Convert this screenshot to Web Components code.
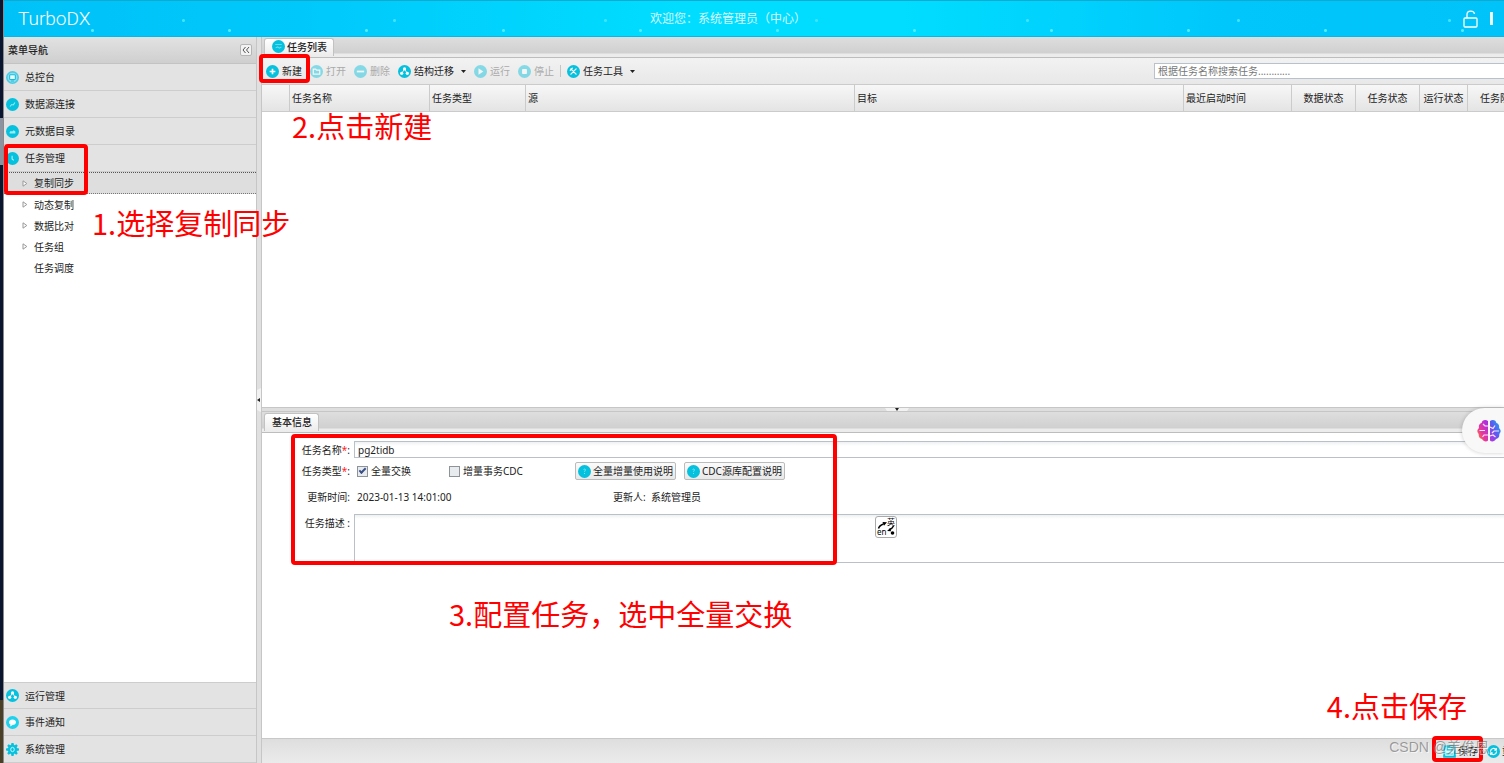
<!DOCTYPE html>
<html lang="zh-CN">
<head>
<meta charset="utf-8">
<title>TurboDX</title>
<style>
  html, body { margin: 0; height: 100%; }
  body {
    font: 10px/14px "Noto Sans", "Noto Sans CJK SC", sans-serif;
    color: #222;
    background: #fff;
    overflow: hidden;
    --cyan: #06c1dd;
    --line: #c8c8c8;
    --red: #f00;
  }
</style>
</head>
<body>
<dx-app></dx-app>

<script>
const BASE = `
  *, *::before, *::after { box-sizing: border-box; }
  button, input, textarea { font: inherit; color: inherit; margin: 0; padding: 0; border: 0; background: none; border-radius: 0; outline: 0; }
  a { color: inherit; text-decoration: none; }
`;

function define(name, css, html) {
  const template = document.createElement('template');
  template.innerHTML = `<style>${BASE}${css}</style>${html}`;
  customElements.define(name, class extends HTMLElement {
    constructor() {
      super();
      this.attachShadow({ mode: 'open' }).append(template.content.cloneNode(true));
    }
  });
}

/* Round toolbar and menu icons, 16-unit grid */
const disc = inner => `<circle cx="8" cy="8" r="8" fill="#06c1dd"/>${inner}`;
const stroke = d => `<path d="${d}" fill="none" stroke="#fff" stroke-width="1.5" stroke-linecap="round" stroke-linejoin="round"/>`;
const ICONS = {
  console: `<circle cx="8" cy="8" r="7" fill="#8fdff0" stroke="#4fcbe2" stroke-width="2"/><rect x="4.500" y="4.500" width="7" height="6" rx="1" fill="#e9fbff" stroke="#16bcd9" stroke-width="1.300"/><path d="M6 12.300h4" stroke="#16bcd9" stroke-width="1.200"/>`,
  link: disc(`<path d="M5 10.500l2-2.500 2 .5 2-3" fill="none" stroke="#8fe9f5" stroke-width="1.300"/>`),
  catalog: disc(`<path d="M4.500 10.500h7V8l-2-1.500-2 1.500-1.500-.5-1.500 1z" fill="#9cecf7"/>`),
  clock: disc(`<path d="M7.500 4.500v4l2 1.800" fill="none" stroke="#b5f2fa" stroke-width="1.300"/>`),
  nodes: disc(`<circle cx="8" cy="4.800" r="2" fill="#fff"/><circle cx="4.500" cy="10.300" r="2" fill="#fff"/><circle cx="11.500" cy="10.300" r="2" fill="#fff"/><path d="M8 5L4.500 10.300M8 5l3.500 5.300" stroke="#fff" stroke-width="1"/>`),
  chat: `<circle cx="8" cy="8" r="8" fill="#1ed2ec"/><path d="M8 4.200c2.600 0 4.300 1.500 4.300 3.400S10.600 11 8 11l-2.800 1.800.3-2.400C4.300 9.700 3.700 8.700 3.700 7.600c0-1.900 1.700-3.400 4.300-3.400z" fill="#fff"/>`,
  gear: `<g fill="#06c1dd"><circle cx="8" cy="8" r="5.800"/><path d="M6.700 0h2.600l.6 3H6.100zM6.700 16h2.600l.6-3H6.100zM0 6.700v2.600l3 .6V6.100zM16 6.700v2.600l-3 .6V6.100zM1.500 3.300l1.800-1.800 2.500 1.700-2.600 2.600zM14.500 3.300l-1.800-1.800-2.500 1.700 2.600 2.600zM1.500 12.700l1.800 1.800 2.500-1.700-2.600-2.600zM14.500 12.700l-1.800 1.800-2.500-1.700 2.600-2.600z"/></g><ellipse cx="8" cy="8" rx="2.200" ry="2.700" fill="none" stroke="#c9f5fb" stroke-width="1.200"/>`,
  list: disc(`<path d="M4 5.500h8M4.500 9.500l2.500-1 2 1.500 2.500-1.500" fill="none" stroke="#62dced" stroke-width="1.400"/>`),
  plus: disc(`<path d="M8 4.500v7M4.500 8h7" stroke="#fff" stroke-width="2"/>`),
  folder: disc(`<path d="M4 5h3l1 1.200h4v5H4z" fill="none" stroke="#fff" stroke-width="1.500"/>`),
  minus: disc(`<path d="M3.500 8h9" stroke="#fff" stroke-width="2.200"/>`),
  play: disc(`<path d="M5.500 4v8l6-4z" fill="#fff"/>`),
  stop: disc(`<rect x="5" y="5" width="6" height="6" rx="1" fill="#fff"/>`),
  tools: disc(stroke('M4.800 4.800l6.400 6.400M11.200 4.800l-6.400 6.400M4 6.500L6.500 4')),
  help: disc(`<path d="M6.800 5.800c.4-1.300 2.700-1 2.400.5-.2.800-1.200.9-1.200 2M8 9.900v1.200" fill="none" stroke="#7be4f2" stroke-width="1.200"/>`),
  save: `<path d="M1.500 1.500h13v13h-13z" fill="#dff8fc" stroke="#06c1dd" stroke-width="2.600"/><path d="M5 2v4h6V2M4 11h8" fill="none" stroke="#06c1dd" stroke-width="1.600"/>`,
  refresh: disc(stroke('M4.300 7.500a3.800 3.800 0 0 1 7-1.500M11.700 8.500a3.800 3.800 0 0 1-7 1.500M11.500 4.300V6.200H9.600M4.500 11.700V9.800h1.900')),
};

customElements.define('dx-icon', class extends HTMLElement {
  constructor() { super(); this.attachShadow({ mode: 'open' }); }
  connectedCallback() {
    this.shadowRoot.innerHTML = `<style>
      :host { display: block; flex: none; width: 13px; height: 13px; }
      svg { display: block; width: 100%; height: 100%; }
    </style><svg viewBox="0 0 16 16" aria-hidden="true">${ICONS[this.getAttribute('name')]}</svg>`;
  }
});

/* Red tutorial frame and caption, placed over the panel they explain */
define('dx-frame', `
  :host { display: block; position: absolute; z-index: 5; border: 4px solid var(--red); border-radius: 4px; pointer-events: none; }
`, ``);
define('dx-caption', `
  :host { display: block; position: absolute; z-index: 6; white-space: nowrap; pointer-events: none;
    font: 29px/36px "Noto Sans CJK SC", sans-serif; color: var(--red); }
`, `<slot></slot>`);

define('dx-header', `
  :host {
    display: grid; grid-template-columns: 1fr auto 1fr; align-items: center; height: 37px;
    padding: 0 0 0 14px; color: #fff; border-top: 1px solid #12a9d0; border-bottom: 1px solid #03b9e6;
    background:
      radial-gradient(circle, #4fecff 1px, transparent 2px) 20px 9px / 137px 41px,
      radial-gradient(circle, #3ce4ff 1px, transparent 2px) 74px 3px / 211px 33px,
      linear-gradient(90deg, #00c2f8, #00c8fb 20%, #00ddff 45%, #00ddff 60%, #00c6fb 82%, #00c3fa);
  }
  h1 { margin: 0; font: 300 19px/26px Roboto, sans-serif; }
  p { margin: 0 66px 0 0; font-size: 12px; line-height: 16px; color: #d8faff; }
  nav { justify-self: end; display: flex; align-items: center; gap: 12px; padding-right: 11px; }
  svg { display: block; width: 15px; height: 18px; }
  i { width: 3px; height: 13px; background: #e9fbff; }
`, `
  <h1>TurboDX</h1>
  <p>欢迎您：系统管理员（中心）</p>
  <nav>
    <button type="button" aria-label="解锁"><svg viewBox="0 0 15 18" fill="none" stroke="#fff" stroke-width="1.300"><rect x="1" y="8" width="13" height="9" rx="1"/><path d="M4 8V4.500C4 0 11 0 11.500 4"/></svg></button>
    <i></i>
  </nav>
`);

define('dx-menu-item', `
  :host { display: block; flex: none; height: 27px; background: #e3e3e3; border-bottom: 1px solid #cdcdcd; }
  a { display: flex; align-items: center; gap: 6px; height: 100%; padding-left: 2px; }
`, `<a href="#"><slot name="icon"></slot><slot></slot></a>`);

define('dx-tree-item', `
  :host { display: block; height: 21px; }
  :host([selected]) { height: 22px; background: #dedede; border-top: 1px dotted #555; border-bottom: 1px dotted #777; }
  a { display: flex; align-items: center; gap: 6px; height: 100%; padding-left: 18px; }
  svg { width: 6px; height: 7px; }
  :host([leaf]) svg { visibility: hidden; }
`, `<a href="#"><svg viewBox="0 0 6 7" fill="#fff" stroke="#999"><path d="M1 .8v5.400L4.800 3.500z"/></svg><slot></slot></a>`);

define('dx-sidebar', `
  :host { position: relative; display: flex; flex-direction: column; background: #fff; min-height: 0; }
  header { display: flex; align-items: center; justify-content: space-between; flex: none; height: 27px; padding: 0 4px;
    background: linear-gradient(#e2e2e2, #cfcfcf); border-bottom: 1px solid #c3c3c3; }
  h2 { margin: 0; font: inherit; font-weight: 500; }
  header button { display: grid; place-items: center; width: 12px; height: 12px; border: 1px solid #b5b5b5; border-radius: 2px; background: #f3f3f3; }
  header svg { width: 8px; height: 8px; }
  .tree { flex: 1; }
  .first { border-top: 1px solid #cdcdcd; }
  .boxed { left: 0; top: 107px; width: 84px; height: 51px; }
  dx-caption { left: 88px; top: 167px; }
`, `
  <header><h2>菜单导航</h2><button type="button" aria-label="收起"><svg viewBox="0 0 8 8" fill="none" stroke="#555"><path d="M3.500 1L1 4l2.500 3M7 1L4.500 4 7 7"/></svg></button></header>
  <dx-menu-item><dx-icon slot="icon" name="console"></dx-icon>总控台</dx-menu-item>
  <dx-menu-item><dx-icon slot="icon" name="link"></dx-icon>数据源连接</dx-menu-item>
  <dx-menu-item><dx-icon slot="icon" name="catalog"></dx-icon>元数据目录</dx-menu-item>
  <dx-menu-item><dx-icon slot="icon" name="clock"></dx-icon>任务管理</dx-menu-item>
  <div class="tree">
    <dx-tree-item selected>复制同步</dx-tree-item>
    <dx-tree-item>动态复制</dx-tree-item>
    <dx-tree-item>数据比对</dx-tree-item>
    <dx-tree-item>任务组</dx-tree-item>
    <dx-tree-item leaf>任务调度</dx-tree-item>
  </div>
  <dx-menu-item class="first"><dx-icon slot="icon" name="nodes"></dx-icon>运行管理</dx-menu-item>
  <dx-menu-item><dx-icon slot="icon" name="chat"></dx-icon>事件通知</dx-menu-item>
  <dx-menu-item><dx-icon slot="icon" name="gear"></dx-icon>系统管理</dx-menu-item>
  <dx-frame class="boxed"></dx-frame>
  <dx-caption>1.选择复制同步</dx-caption>
`);

define('dx-tab-bar', `
  :host { display: flex; align-items: flex-end; flex: none; height: 21px; padding: 0 2px;
    background: linear-gradient(#dedede, #d0d0d0 16px, #ececec 17px); border-bottom: 1px solid #bdbdbd; }
  button { display: flex; align-items: center; gap: 2px; height: 18px; margin-bottom: 1px; padding: 0 6px 2px 7px; font-weight: 500;
    border: 1px solid #c2c2c2; border-bottom: 0; border-radius: 3px 3px 0 0; background: linear-gradient(#fff, #ececec); }
`, `<button type="button" role="tab" aria-selected="true"><slot name="icon"></slot><slot></slot></button>`);

customElements.define('dx-tool', class extends HTMLElement {
  constructor() {
    super();
    const off = this.hasAttribute('disabled');
    const arrow = this.hasAttribute('menu') ? '<svg viewBox="0 0 5 3"><path d="M0 0h5L2.500 3z" fill="#222"/></svg>' : '';
    this.attachShadow({ mode: 'open' }).innerHTML = `<style>${BASE}
      :host { display: block; flex: none; }
      button { display: flex; align-items: center; gap: 3px; height: 18px; white-space: nowrap; }
      svg { width: 5px; height: 3px; margin-left: 4px; }
      button:disabled { color: #aaa; }
      button:disabled dx-icon { opacity: .45; }
    </style><button type="button"${off ? ' disabled' : ''}><dx-icon name="${this.getAttribute('icon')}"></dx-icon><slot></slot>${arrow}</button>`;
  }
});

define('dx-task-list', `
  :host { position: relative; display: flex; flex-direction: column; min-width: 0; min-height: 0; background: #fff; }
  .tools { display: flex; align-items: center; gap: 8px; flex: none; height: 26px; padding-left: 4px;
    background: linear-gradient(#f2f2f2, #e8e8e8); }
  .tools hr { width: 1px; height: 12px; margin: 0 -2px; border: 0; background: #c4c4c4; }
  .tools .search { width: 350px; height: 16px; margin-left: auto; padding: 0 3px; background: #fff; border: 1px solid #b9c2cc; border-right: 0; }
  .search::placeholder { color: #777; opacity: 1; }
  table { width: 100%; table-layout: fixed; border-collapse: separate; border-spacing: 0; }
  th { height: 28px; padding: 0 2px; font-weight: 400; text-align: left; white-space: nowrap; overflow: hidden;
    background: linear-gradient(#f7f7f7, #e4e4e4); border: solid #cbcbcb; border-width: 1px 1px 1px 0; }
  th.mid { text-align: center; }
  th.cut { padding-left: 12px; border-right: 0; }
  .c0 { width: 28px; } .c1 { width: 140px; } .c2 { width: 96px; } .c5 { width: 108px; }
  .c6 { width: 64px; } .c8 { width: 48px; } .c9 { width: 36px; }
  .boxed { left: -3px; top: 17px; width: 51px; height: 29px; }
  dx-caption { left: 30px; top: 70px; }
`, `
  <dx-tab-bar><dx-icon slot="icon" name="list"></dx-icon>任务列表</dx-tab-bar>
  <div class="tools" role="toolbar">
    <dx-tool icon="plus">新建</dx-tool>
    <dx-tool icon="folder" disabled>打开</dx-tool>
    <dx-tool icon="minus" disabled>删除</dx-tool>
    <dx-tool icon="nodes" menu>结构迁移</dx-tool>
    <dx-tool icon="play" disabled>运行</dx-tool>
    <dx-tool icon="stop" disabled>停止</dx-tool>
    <hr>
    <dx-tool icon="tools" menu>任务工具</dx-tool>
    <input class="search" type="text" aria-label="搜索任务" placeholder="根据任务名称搜索任务............">
  </div>
  <table>
    <colgroup><col class="c0"><col class="c1"><col class="c2"><col><col><col class="c5"><col class="c6"><col class="c6"><col class="c8"><col class="c9"></colgroup>
    <thead><tr>
      <th></th><th>任务名称</th><th>任务类型</th><th>源</th><th>目标</th><th>最近启动时间</th>
      <th class="mid">数据状态</th><th class="mid">任务状态</th><th class="mid">运行状态</th><th class="cut">任务阶段</th>
    </tr></thead>
    <tbody></tbody>
  </table>
  <dx-frame class="boxed"></dx-frame>
  <dx-caption>2.点击新建</dx-caption>
`);

define('dx-task-form', `
  :host { display: grid; grid-template-columns: 88px minmax(0, 1fr); grid-template-rows: 17px 18px 26px 49px; gap: 4px; padding-top: 8px; }
  .label { justify-self: end; align-self: center; white-space: nowrap; }
  .label.top { align-self: start; padding-top: 2px; }
  b { font-weight: 400; color: #f22; }
  .field { width: 100%; height: 100%; padding: 0 3px; background: linear-gradient(#eef1f2, #fff 4px); border: 1px solid #b9c0c8; border-right: 0; }
  textarea.field { display: block; resize: none; }
  .area { position: relative; }
  .row { display: grid; align-items: center; padding-left: 3px; white-space: nowrap; }
  .types { grid-template-columns: 92px 126px auto auto 1fr; }
  .meta { grid-template-columns: 256px 1fr; }
  .check { display: flex; align-items: center; gap: 3px; }
  .check input { appearance: none; display: grid; place-items: center; width: 11px; height: 11px; border: 1px solid #8d9399; background: #e9ecef; }
  .check input:checked::before { content: ""; width: 7px; height: 4px; margin-bottom: 2px; border: solid #3a4f86; border-width: 0 0 2px 2px; transform: rotate(-45deg); }
  .help { display: flex; align-items: center; gap: 2px; height: 18px; margin-right: 8px; padding: 0 2px; border: 1px solid #bbb; border-radius: 2px; background: linear-gradient(#fbfbfb, #e8e8e8); }
  .translate { position: absolute; left: 521px; top: 2px; width: 22px; height: 22px; border: 1px solid #aaa; border-radius: 3px; background: #fff; }
  .translate span { position: absolute; font-size: 8px; line-height: 8px; color: #000; }
  .zh { right: 1px; top: 1px; } .en { left: 1px; bottom: 1px; }
  .translate svg { display: block; width: 20px; height: 20px; }
`, `
  <label class="label" for="name">任务名称<b>*</b>:</label>
  <input class="field" id="name" type="text" value="pg2tidb">
  <span class="label">任务类型<b>*</b>:</span>
  <div class="row types">
    <label class="check"><input type="checkbox" checked>全量交换</label>
    <label class="check"><input type="checkbox">增量事务CDC</label>
    <button class="help" type="button"><dx-icon name="help"></dx-icon>全量增量使用说明</button>
    <button class="help" type="button"><dx-icon name="help"></dx-icon>CDC源库配置说明</button>
  </div>
  <span class="label">更新时间:</span>
  <div class="row meta"><span>2023-01-13 14:01:00</span><span>更新人:&nbsp; 系统管理员</span></div>
  <label class="label top" for="desc">任务描述 :</label>
  <div class="area">
    <textarea class="field" id="desc"></textarea>
    <button class="translate" type="button"><span class="zh">英</span><span class="en">en</span><svg viewBox="0 0 20 20" fill="none" stroke="#000" stroke-width="1.500"><path d="M2.500 11.500c.5-2 2-3.500 5-4.500M17.500 9c-.8 2-2.500 3-4.500 3.800"/><path d="M6.500 5l4.500.3-3 3.500zM14.500 11l-3.500 3 4 .3z" fill="#000" stroke="none"/><circle cx="16.500" cy="16" r="1.800" fill="#000" stroke="none"/></svg></button>
  </div>
`);

define('dx-details', `
  :host { position: relative; display: flex; flex-direction: column; min-width: 0; background: #fff; }
  .split { display: grid; justify-items: center; flex: none; height: 5px; padding-left: 28px; background: #dedede; border: solid #c6c6c6; border-width: 1px 0; }
  .split svg { width: 24px; height: 3px; }
  .body { flex: 1; }
  footer { display: flex; align-items: center; justify-content: flex-end; gap: 9px; flex: none; height: 25px; overflow: hidden;
    background: linear-gradient(#dedede, #ebebeb); border-top: 1px solid #c8c8c8; }
  footer button { display: flex; align-items: center; gap: 2px; white-space: nowrap; }
  .cut { width: 17px; overflow: hidden; }
  .form-box { left: 29px; top: 27px; width: 546px; height: 131px; }
  .save-box { right: 21px; bottom: 1px; width: 51px; height: 26px; }
  .three { left: 187px; top: 188px; }
  .four { right: 37px; bottom: 40px; }
  .watermark { position: absolute; z-index: 7; right: 15px; bottom: 6px; color: #6669; white-space: nowrap;
    font: 14px/20px "Liberation Sans", "Noto Sans CJK SC", sans-serif; text-shadow: 1px 1px 0 #fff9; }
  .assistant { position: absolute; z-index: 4; right: 0; top: 1px; display: flex; align-items: center; width: 42px; height: 45px; padding-left: 15px; background: #f8f8f9; border-radius: 23px 0 0 23px; box-shadow: 0 0 4px #0003; }
  .assistant svg { width: 24px; height: 24px; }
`, `
  <div class="split"><svg viewBox="0 0 24 3"><path d="M0 0h24l-2 3H2z" fill="#f2f2f2"/><path d="M10 0h4l-2 3z" fill="#222"/></svg></div>
  <dx-tab-bar>基本信息</dx-tab-bar>
  <div class="body"><dx-task-form></dx-task-form></div>
  <footer>
    <button type="button"><dx-icon name="save"></dx-icon>保存</button>
    <button type="button" class="cut"><dx-icon name="refresh"></dx-icon>重置</button>
  </footer>
  <dx-frame class="form-box"></dx-frame>
  <dx-caption class="three">3.配置任务，选中全量交换</dx-caption>
  <dx-caption class="four">4.点击保存</dx-caption>
  <dx-frame class="save-box"></dx-frame>
  <span class="watermark">CSDN @羌俊恩</span>
  <button class="assistant" type="button" aria-label="助手"><svg viewBox="0 0 24 24">
    <defs>
      <linearGradient id="l" x1="0" y1="1" x2="1" y2="0"><stop offset="0" stop-color="#ff8a1e"/><stop offset=".4" stop-color="#e8389a"/><stop offset="1" stop-color="#a02cf0"/></linearGradient>
      <linearGradient id="r" x1="1" y1="0" x2="0" y2="1"><stop offset="0" stop-color="#12b4f5"/><stop offset=".5" stop-color="#5a5cf0"/><stop offset="1" stop-color="#c030e0"/></linearGradient>
    </defs>
    <path d="M11 2C8-.2 5 1.500 4.600 4 2 4.800 1.500 7 2 9-.2 10.500-.1 13.500 1.700 15c-.4 3 1.300 4.700 3.300 5 1.200 2.600 4.500 3.200 6 1.500z" fill="url(#l)"/>
    <path d="M13 2c3-2.200 6-.5 6.400 2 2.600.8 3.100 3 2.600 5 2.200 1.500 2.100 4.500.3 6 .4 3-1.300 4.700-3.300 5-1.200 2.600-4.500 3.200-6 1.500z" fill="url(#r)"/>
    <path d="M11 7H8L6 5M2.500 11.500H8M11 16H7l-1.500 2M13 8l3 1.500 2-3M22 12h-5l-2 2M13 17l3-1 2.500 2" fill="none" stroke="#ffe6fb" stroke-width="1.200"/>
  </svg></button>
`);

define('dx-app', `
  :host { display: grid; grid-template: auto minmax(0, 1fr) / 4px 252px 6px minmax(0, 1fr); height: 100vh; }
  .edge { grid-row: 1 / 3; border-right: 1px solid #8a8a8a;
    background: linear-gradient(#0a1530 118px, #8b93a0 118px 165px, #0a1530 165px 700px, #4a4025 700px); }
  dx-header { grid-column: 2 / 5; }
  .gutter { display: grid; align-items: center; background: #e0e0e0; border: solid #c6c6c6; border-width: 0 1px; }
  .gutter svg { width: 4px; height: 24px; }
  main { display: grid; grid-template-rows: minmax(0, 1fr) 356px; min-width: 0; }
`, `
  <div class="edge"></div>
  <dx-header></dx-header>
  <dx-sidebar></dx-sidebar>
  <div class="gutter"><svg viewBox="0 0 4 24"><path d="M0 2l4-2v24l-4-2z" fill="#f2f2f2"/><path d="M3 10v4l-3-2z" fill="#222"/></svg></div>
  <main><dx-task-list></dx-task-list><dx-details></dx-details></main>
`);
</script>
</body>
</html>
